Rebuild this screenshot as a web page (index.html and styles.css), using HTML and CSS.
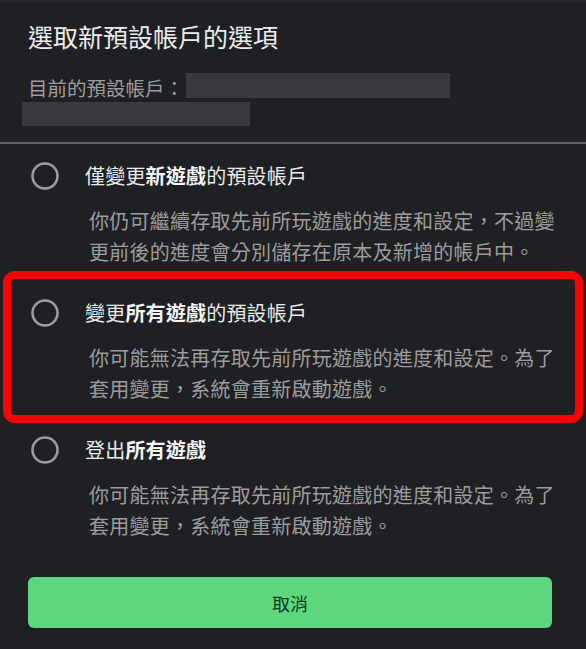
FILE: index.html
```html
<!DOCTYPE html>
<html lang="zh-Hant">
<head>
<meta charset="utf-8">
<title>選取新預設帳戶的選項</title>
<link rel="stylesheet" href="styles.css">
</head>
<body>
<div class="dialog">
  <h1 class="title">選取新預設帳戶的選項</h1>
  <div class="current">
    <span class="current-label">目前的預設帳戶：</span><span class="redact redact-a"></span>
    <span class="redact redact-b"></span>
  </div>
  <div class="divider"></div>
  <div class="options">
    <div class="option">
      <svg class="radio" width="28" height="28" viewBox="0 0 28 28"><circle cx="14" cy="14" r="12.5" fill="none" stroke="#9c9c9c" stroke-width="2.6"/></svg>
      <div class="label">僅變更<b>新遊戲</b>的預設帳戶</div>
      <div class="desc">你仍可繼續存取先前所玩遊戲的進度和設定，不過變更前後的進度會分別儲存在原本及新增的帳戶中。</div>
    </div>
    <div class="option highlight">
      <svg class="radio" width="28" height="28" viewBox="0 0 28 28"><circle cx="14" cy="14" r="12.5" fill="none" stroke="#9c9c9c" stroke-width="2.6"/></svg>
      <div class="label">變更<b>所有遊戲</b>的預設帳戶</div>
      <div class="desc">你可能無法再存取先前所玩遊戲的進度和設定。為了套用變更，系統會重新啟動遊戲。</div>
    </div>
    <div class="option">
      <svg class="radio" width="28" height="28" viewBox="0 0 28 28"><circle cx="14" cy="14" r="12.5" fill="none" stroke="#9c9c9c" stroke-width="2.6"/></svg>
      <div class="label">登出<b>所有遊戲</b></div>
      <div class="desc">你可能無法再存取先前所玩遊戲的進度和設定。為了套用變更，系統會重新啟動遊戲。</div>
    </div>
  </div>
  <div class="actions">
    <button class="cancel" type="button">取消</button>
  </div>
</div>
</body>
</html>
```
FILE: styles.css
```css
html, body {
  margin: 0;
  padding: 0;
  background: #1f2023;
}
body {
  font-family: "Noto Sans CJK TC", "Noto Sans", sans-serif;
  color: #e6e6e6;
  width: 586px;
  height: 649px;
  overflow: hidden;
}
.dialog {
  border-top: 2px solid #26272b;
}
.title {
  margin: 0;
  padding: 18px 0 0 28px;
  font-size: 25px;
  line-height: 33px;
  font-weight: 400;
  color: #ececec;
}
.current {
  margin-top: 20px;
  padding-left: 28px;
  font-size: 19.5px;
  line-height: 25px;
  color: #9d9d9d;
}
.current-label {
  vertical-align: top;
  position: relative;
  top: 2px;
}
.redact {
  display: inline-block;
  background: #393a3e;
}
.redact-a {
  width: 264px;
  height: 25px;
  margin-left: 2px;
  vertical-align: top;
}
.redact-b {
  display: block;
  width: 228px;
  height: 24px;
  margin: 4px 0 0 -6px;
}
.divider {
  height: 2px;
  margin-top: 16px;
  background: #606165;
}
.options {
  display: flex;
  flex-direction: column;
  gap: 32px;
  padding-top: 18px;
}
.option {
  position: relative;
  display: grid;
  grid-template-columns: 28px 1fr;
  column-gap: 26px;
  padding: 0 22px 0 31px;
}
.radio {
  grid-column: 1;
  grid-row: 1;
  align-self: center;
  display: block;
}
.label {
  grid-column: 2;
  grid-row: 1;
  font-size: 20px;
  line-height: 28px;
  letter-spacing: 0.2px;
  color: #ebebeb;
}
.label b {
  font-weight: 700;
  color: #f4f4f4;
}
.desc {
  grid-column: 2;
  grid-row: 2;
  margin-top: 15px;
  padding-left: 4px;
  font-size: 20px;
  line-height: 31px;
  letter-spacing: 0.25px;
  color: #9c9c9c;
}
.highlight::after {
  content: "";
  position: absolute;
  left: 3px;
  right: 3px;
  top: -28px;
  bottom: -19px;
  border: 8px solid #fb0000;
  border-radius: 12px;
  pointer-events: none;
}
.actions {
  padding: 36px 34px 0 28px;
}
.cancel {
  display: block;
  width: 100%;
  height: 51px;
  border: none;
  border-radius: 6px;
  background: #5dd67e;
  color: #163a1f;
  font-family: "Noto Sans CJK TC", "Noto Sans", sans-serif;
  font-size: 18px;
  font-weight: 400;
}
```
